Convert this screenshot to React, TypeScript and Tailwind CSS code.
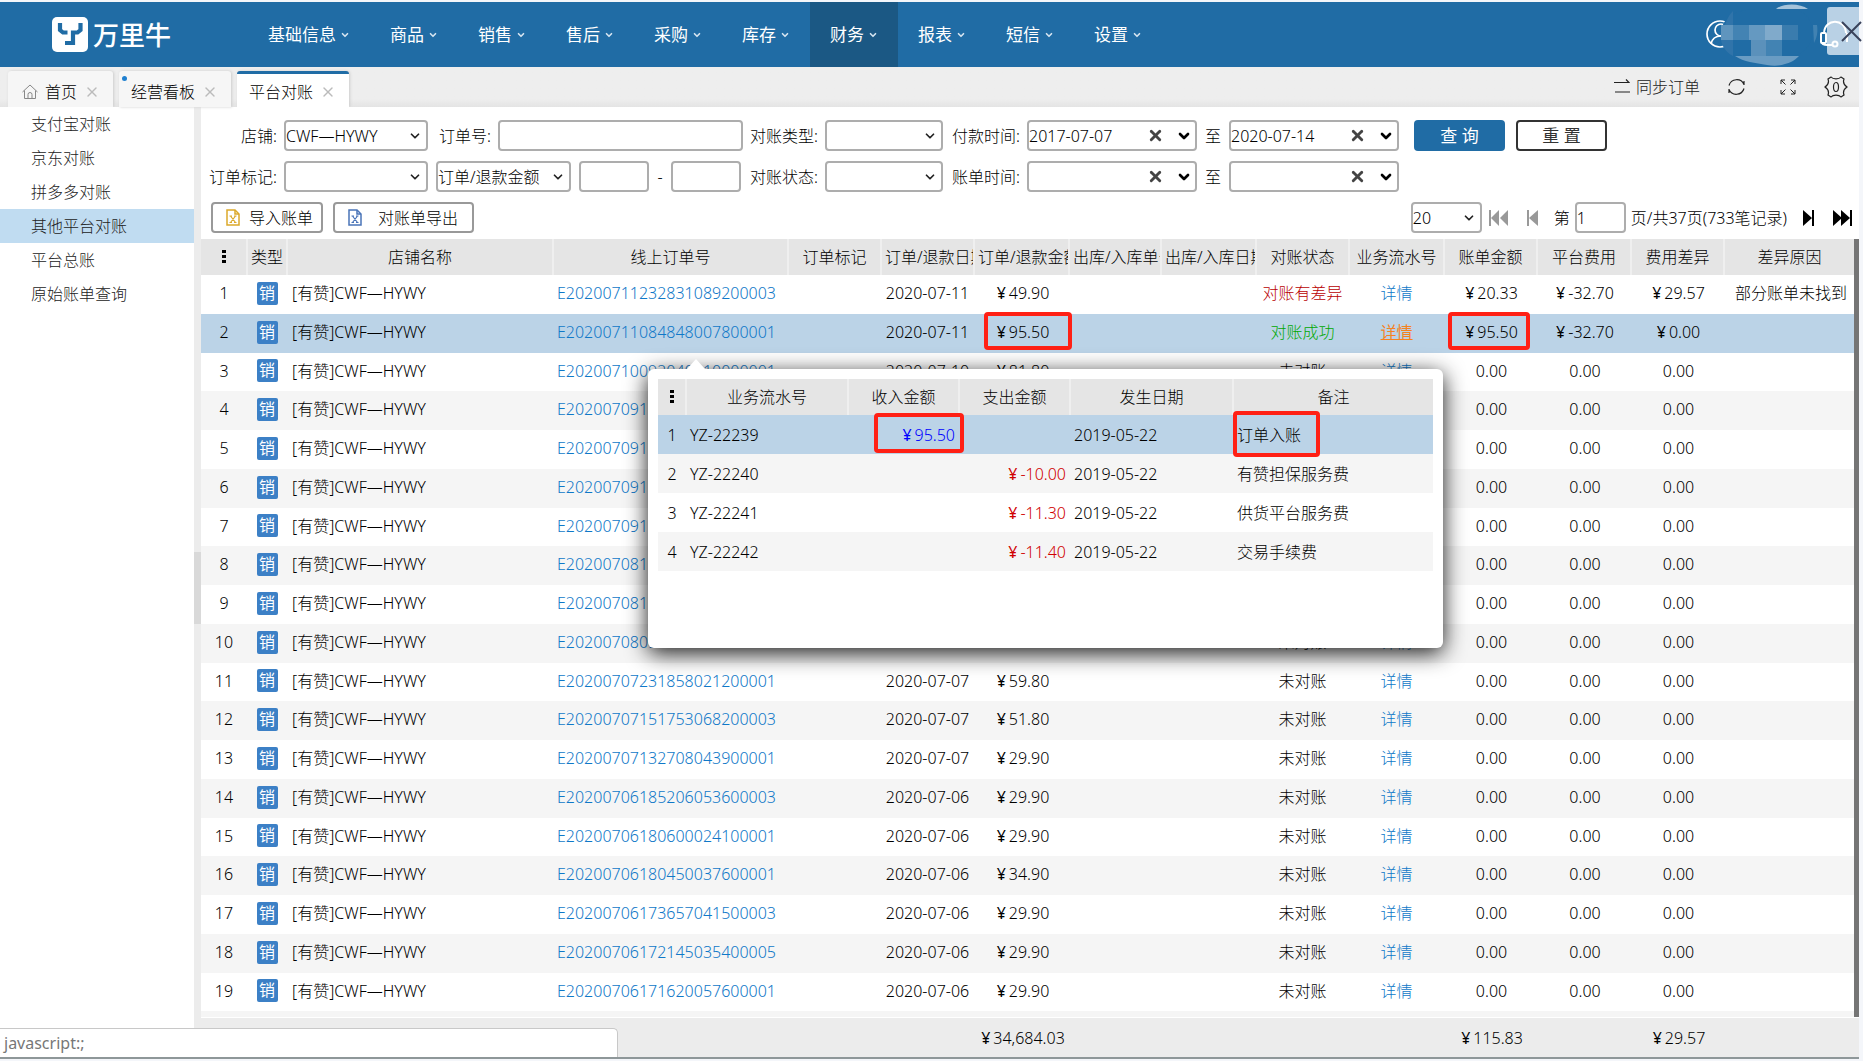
import React from "react";
import { ChevronDown, X } from "lucide-react";

const menus = ["基础信息", "商品", "销售", "售后", "采购", "库存", "财务", "报表", "短信", "设置"];
const sideItems = ["支付宝对账", "京东对账", "拼多多对账", "其他平台对账", "平台总账", "原始账单查询"];

type Row = {
  order: string;
  date: string;
  amount: string;
  status: string;
  bill: string;
  fee: string;
  diff: string;
  reason: string;
};

const pending = (order: string, date: string, amount: string): Row => ({
  order,
  date,
  amount,
  status: "未对账",
  bill: "0.00",
  fee: "0.00",
  diff: "0.00",
  reason: "",
});

const rows: Row[] = [
  { order: "E20200711232831089200003", date: "2020-07-11", amount: "¥49.90", status: "对账有差异", bill: "¥20.33", fee: "¥-32.70", diff: "¥29.57", reason: "部分账单未找到" },
  { order: "E20200711084848007800001", date: "2020-07-11", amount: "¥95.50", status: "对账成功", bill: "¥95.50", fee: "¥-32.70", diff: "¥0.00", reason: "" },
  pending("E20200710092040010000001", "2020-07-10", "¥81.80"),
  pending("E20200709193045021200001", "2020-07-09", "¥29.90"),
  pending("E20200709182011043600001", "2020-07-09", "¥29.90"),
  pending("E20200709164502017800003", "2020-07-09", "¥34.90"),
  pending("E20200709113208052400001", "2020-07-09", "¥29.90"),
  pending("E20200708191530038600001", "2020-07-08", "¥29.90"),
  pending("E20200708102644026200003", "2020-07-08", "¥29.90"),
  pending("E20200708093317064100001", "2020-07-08", "¥51.80"),
  pending("E20200707231858021200001", "2020-07-07", "¥59.80"),
  pending("E20200707151753068200003", "2020-07-07", "¥51.80"),
  pending("E20200707132708043900001", "2020-07-07", "¥29.90"),
  pending("E20200706185206053600003", "2020-07-06", "¥29.90"),
  pending("E20200706180600024100001", "2020-07-06", "¥29.90"),
  pending("E20200706180450037600001", "2020-07-06", "¥34.90"),
  pending("E20200706173657041500003", "2020-07-06", "¥29.90"),
  pending("E20200706172145035400005", "2020-07-06", "¥29.90"),
  pending("E20200706171620057600001", "2020-07-06", "¥29.90"),
];

const flows = [
  { no: "YZ-22239", income: "¥95.50", expense: "", date: "2019-05-22", note: "订单入账" },
  { no: "YZ-22240", income: "", expense: "¥-10.00", date: "2019-05-22", note: "有赞担保服务费" },
  { no: "YZ-22241", income: "", expense: "¥-11.30", date: "2019-05-22", note: "供货平台服务费" },
  { no: "YZ-22242", income: "", expense: "¥-11.40", date: "2019-05-22", note: "交易手续费" },
];

function Money({ value }: { value: string }) {
  if (!value.startsWith("¥")) return <>{value}</>;
  return (
    <>
      <span className="mr-[3px] font-normal">¥</span>
      {value.slice(1)}
    </>
  );
}

function Marked({ on, children, className }: { on: boolean; children: React.ReactNode; className: string }) {
  if (!on) return <>{children}</>;
  return (
    <span className="relative inline-block">
      {children}
      <span className={"pointer-events-none absolute rounded-[4px] border-4 border-[#ff2015] " + className} />
    </span>
  );
}

function Logo() {
  return (
    <svg width="36" height="35" viewBox="0 0 36 35" aria-hidden="true">
      <rect width="36" height="35" rx="5" fill="#fff" />
      <path d="M8 6v7l3 2.500h4.500M28.500 6v7l-3 2.500H21v10.500h-8" fill="none" stroke="#206ca5" strokeWidth="4.200" />
    </svg>
  );
}

function SheetIcon({ className }: { className: string }) {
  return (
    <svg className={"shrink-0 " + className} width="14" height="17" viewBox="0 0 14 17" fill="none" stroke="currentColor" strokeWidth="1.500" aria-hidden="true">
      <path d="M1 1h8l4 4v11H1z" />
      <path d="M9 1v4h4" />
      <path d="M4.500 7l5 6.500M9.500 7l-5 6.500M3.500 7h2.500M8 7h2.500M3.500 13.500h2.500M8 13.500h2.500" strokeWidth="1.200" />
    </svg>
  );
}

function Picker({ label, value, className }: { label: string; value: string; className: string }) {
  return (
    <span className={"relative h-[31px] shrink-0 " + className}>
      <select aria-label={label} defaultValue={value} className="h-full w-full appearance-none rounded-[4px] border-2 border-[#adadad] bg-white pr-6 leading-none text-black">
        <option>{value}</option>
      </select>
      <ChevronDown size={14} strokeWidth={3} className="pointer-events-none absolute right-[6px] top-[9px] text-[#222]" />
    </span>
  );
}

function DateBox({ label, value, className }: { label: string; value: string; className: string }) {
  return (
    <span className={"flex h-[31px] shrink-0 items-center rounded-[4px] border-2 border-[#adadad] bg-white pr-[3px] " + className}>
      <input aria-label={label} defaultValue={value} className="h-full w-full min-w-0 flex-1 text-black outline-none" />
      <button aria-label={"清除" + label} className="mr-[12px] text-[#444]">
        <X size={17} strokeWidth={4} />
      </button>
      <button aria-label={"选择" + label} className="text-black">
        <ChevronDown size={16} strokeWidth={4} />
      </button>
    </span>
  );
}

const box = "h-[31px] shrink-0 rounded-[4px] border-2 border-[#adadad] bg-white outline-none";
const lab = "shrink-0 pr-[7px] text-right";

function Header() {
  return (
    <header className="relative mt-[2px] flex h-[65px] items-center bg-[#206ca5] font-normal text-white">
      <a href="#home" className="flex w-[248px] shrink-0 items-center gap-[5px] pl-[52px] text-[26px] font-medium leading-none">
        <Logo />
        <span>万里牛</span>
      </a>
      <nav className="flex h-full">
        {menus.map((m) => (
          <button key={m} className={"flex h-full items-center gap-1 px-5 text-[17px] " + (m === "财务" ? "bg-[#1b5884]" : "")}>
            {m}
            <ChevronDown size={10} strokeWidth={4} className="text-[#d5e4f0]" />
          </button>
        ))}
      </nav>
      <svg className="ml-auto h-[65px] w-[157px] shrink-0 overflow-visible" viewBox="0 0 157 65" fill="none" aria-hidden="true">
        <g stroke="#fff" strokeWidth="1.700">
          <circle cx="18" cy="32" r="13" />
          <circle cx="19" cy="28" r="6" />
          <path d="M9 42c1-5 4-8 10-8s9 3 10 8" />
        </g>
        <path d="M19 33C19 16 32 8 54 7h40c12 5 16 12 16 23 0 16-10 22-23 26-25 12-64 6-68-23z" fill="#206ca5" />
        <path d="M31 9v14H23c2-6 4-10 8-14zM19 38h12v16c-6-3-11-9-12-16z" fill="#3074aa" />
        <path d="M19 23h12v15H19z" fill="#5f95be" />
        <path d="M31 23h16v15H31z" fill="#4383b3" />
        <path d="M47 23h16v15H47z" fill="#6599c1" />
        <path d="M63 23h17v15H63z" fill="#80aacb" />
        <path d="M80 23h16v15H80z" fill="#3a7cae" />
        <path d="M49 38h15v16H49z" fill="#5b91bb" />
        <path d="M64 38h16v16H64z" fill="#4283b3" />
        <path d="M33 54h64c-5 5-9 7-14 8-5 2-12 2-18 1-12-2-23-3-32-9z" fill="#6a9cc3" />
        <path d="M74 7c7-6 24-6 32 0z" fill="#a5c3da" />
        <path d="M111 23h4c1 7 0 12-3 18z" fill="#4182b2" />
        <path d="M128 5h29v48h-29a3 3 0 01-3-3V8a3 3 0 013-3z" fill="#b9d1e5" />
        <g stroke="#fff" strokeWidth="2">
          <path d="M122 31c1-15 21-15 22 0" />
          <rect x="119" y="31" width="5" height="10" rx="1" />
          <path d="M120 41c1 2 3 2 10 2M145 31v9" />
          <circle cx="133" cy="42" r="2.500" />
        </g>
        <path d="M140 20l19 19M159 20l-19 19" stroke="#39425a" strokeWidth="2" />
      </svg>
    </header>
  );
}

function CloseTab({ name }: { name: string }) {
  return (
    <button aria-label={"关闭" + name} className="ml-[7px] text-[#bbb]">
      <X size={16} strokeWidth={2} />
    </button>
  );
}

function TabBar() {
  return (
    <div className="flex h-10 items-end bg-gradient-to-b from-[#eeeeee] from-80% to-[#e4e4e4] pl-2 text-base text-black">
      <div className="flex h-9 items-center rounded-t-[3px] bg-[#f6f6f6] pl-[14px] pr-[13px] pt-[6px] shadow-[1px_0_3px_#ccc]">
        <svg width="16" height="16" viewBox="0 0 16 16" fill="none" stroke="#888" aria-hidden="true">
          <path d="M.5 8L8 1l7.500 7M2.500 6.500v8h11v-8M6 14.500v-4a2 2 0 014 0v4" />
        </svg>
        <a href="#home" className="ml-[7px]">首页</a>
        <CloseTab name="首页" />
      </div>
      <div className="relative ml-[6px] flex h-9 items-center rounded-t-[3px] bg-[#f6f6f6] pl-3 pr-[13px] pt-[6px] shadow-[1px_0_3px_#ccc]">
        <span className="absolute left-[3px] top-[5px] size-[5px] rounded-full bg-[#2080d0]" />
        <a href="#board">经营看板</a>
        <CloseTab name="经营看板" />
      </div>
      <div className="ml-[6px] flex h-9 items-center rounded-t-[3px] border-t-[3px] border-[#206ca5] bg-white pl-3 pr-[13px] pt-[3px] shadow-[1px_0_3px_#ccc]">
        <a href="#platform">平台对账</a>
        <CloseTab name="平台对账" />
      </div>
      <div className="ml-auto flex h-full items-center pr-[11px] text-[#222]">
        <button className="flex items-center gap-[6px]">
          <svg width="16" height="16" viewBox="0 0 16 16" fill="none" stroke="currentColor" strokeWidth="1.200" aria-hidden="true">
            <path d="M0 3.500h15l-3-3M16 13H1" />
          </svg>
          同步订单
        </button>
        <button aria-label="刷新" className="ml-7">
          <svg width="17" height="18" viewBox="0 0 17 18" fill="none" stroke="currentColor" strokeWidth="1.200" aria-hidden="true">
            <path d="M1 7.500a8 8 0 0115-1M16 10.500a8 8 0 01-15 1M16 3v4M1 15v-4" />
          </svg>
        </button>
        <button aria-label="全屏" className="ml-[35px]">
          <svg width="16" height="16" viewBox="0 0 16 16" fill="none" stroke="currentColor" aria-hidden="true">
            <path d="M5.500 5.500L1 1M1 5V1h4M10.500 5.500L15 1M11 1h4v4M5.500 10.500L1 15M1 11v4h4M10.500 10.500L15 15M15 11v4h-4" />
          </svg>
        </button>
        <button aria-label="设置" className="ml-[28px]">
          <svg width="24" height="22" viewBox="0 0 24 22" fill="none" stroke="currentColor" strokeWidth="1.200" aria-hidden="true">
            <path d="M7 1c2 2.500 8 2.500 10 0l3 2c-1.500 4 0 6 3 8-3 2-4.500 4-3 8l-3 2c-2-2.500-8-2.500-10 0l-3-2c1.500-4 0-6-3-8 3-2 4.500-4 3-8z" />
            <ellipse cx="12" cy="11" rx="2.500" ry="4.500" />
          </svg>
        </button>
      </div>
    </div>
  );
}

function Pager() {
  return (
    <div className="ml-auto flex items-center pr-[6px]">
      <Picker label="每页条数" value="20" className="w-[71px]" />
      <button aria-label="首页" className="ml-[7px] text-[#999]">
        <svg width="20" height="16" viewBox="0 0 20 16" fill="currentColor" aria-hidden="true"><path d="M0 0h2v16H0zM10 0v16L2 8zM19 0v16l-8-8z" /></svg>
      </button>
      <button aria-label="上一页" className="ml-[18px] text-[#999]">
        <svg width="12" height="16" viewBox="0 0 12 16" fill="currentColor" aria-hidden="true"><path d="M0 0h2v16H0zM11 0v16L2 8z" /></svg>
      </button>
      <label htmlFor="page" className="ml-[15px]">第</label>
      <input id="page" defaultValue="1" className={box + " ml-[5px] w-[51px]"} />
      <span className="ml-[5px]">页/共37页(733笔记录)</span>
      <button aria-label="下一页" className="ml-[16px] text-black">
        <svg width="12" height="16" viewBox="0 0 12 16" fill="currentColor" aria-hidden="true"><path d="M9 0h2v16H9zM0 0v16l9-8z" /></svg>
      </button>
      <button aria-label="末页" className="ml-[18px] text-black">
        <svg width="20" height="16" viewBox="0 0 20 16" fill="currentColor" aria-hidden="true"><path d="M17 0h2v16h-2zM0 0v16l9-8zM8 0v16l9-8z" /></svg>
      </button>
    </div>
  );
}

function Filters() {
  return (
    <div className="flex flex-col gap-[10px] pb-[6px] pt-[13px] text-black">
      <div className="flex items-center">
        <span className={lab + " w-[83px]"}>店铺:</span>
        <Picker label="店铺" value="CWF—HYWY" className="w-[144px]" />
        <label htmlFor="orderNo" className={lab + " w-[70px]"}>订单号:</label>
        <input id="orderNo" className={box + " w-[245px]"} />
        <span className={lab + " w-[82px]"}>对账类型:</span>
        <Picker label="对账类型" value="" className="w-[118px]" />
        <span className={lab + " w-[84px]"}>付款时间:</span>
        <DateBox label="付款开始时间" value="2017-07-07" className="w-[170px]" />
        <span className="w-8 shrink-0 text-center">至</span>
        <DateBox label="付款结束时间" value="2020-07-14" className="w-[170px]" />
        <button className="ml-[15px] h-[31px] w-[91px] rounded-[4px] bg-[#206ca5] text-[17px] font-normal text-white">查 询</button>
        <button className="ml-[11px] h-[31px] w-[91px] rounded-[4px] border-2 border-[#333] bg-white text-[17px] font-normal text-[#333]">重 置</button>
      </div>
      <div className="flex items-center">
        <span className={lab + " w-[83px]"}>订单标记:</span>
        <Picker label="订单标记" value="" className="w-[144px]" />
        <span className="ml-2 flex">
          <Picker label="金额类型" value="订单/退款金额" className="w-[135px]" />
        </span>
        <input aria-label="最小金额" className={box + " ml-2 w-[70px]"} />
        <span className="w-[22px] shrink-0 text-center">-</span>
        <input aria-label="最大金额" className={box + " w-[70px]"} />
        <span className={lab + " w-[84px]"}>对账状态:</span>
        <Picker label="对账状态" value="" className="w-[118px]" />
        <span className={lab + " w-[84px]"}>账单时间:</span>
        <DateBox label="账单开始时间" value="" className="w-[170px]" />
        <span className="w-8 shrink-0 text-center">至</span>
        <DateBox label="账单结束时间" value="" className="w-[170px]" />
      </div>
      <div className="flex items-center pl-[10px]">
        <button className="flex h-[31px] w-[112px] items-center gap-[9px] whitespace-nowrap rounded-[4px] border-2 border-[#999] pl-[13px]">
          <SheetIcon className="text-[#dba92b]" />
          导入账单
        </button>
        <button className="ml-[10px] flex h-[31px] w-[141px] items-center gap-[16px] whitespace-nowrap rounded-[4px] border-2 border-[#999] pl-[13px]">
          <SheetIcon className="text-[#4a74b8]" />
          对账单导出
        </button>
        <Pager />
      </div>
    </div>
  );
}

function Cols() {
  return (
    <colgroup>
      <col className="w-[46px]" />
      <col className="w-[40px]" />
      <col />
      <col className="w-[235px]" />
      <col className="w-[93px]" />
      <col className="w-[93px]" />
      <col className="w-[95px]" />
      <col className="w-[92px]" />
      <col className="w-[95px]" />
      <col className="w-[93px]" />
      <col className="w-[95px]" />
      <col className="w-[93px]" />
      <col className="w-[94px]" />
      <col className="w-[93px]" />
      <col className="w-[130px]" />
    </colgroup>
  );
}

const heads = ["类型", "店铺名称", "线上订单号", "订单标记", "订单/退款日期", "订单/退款金额", "出库/入库单号", "出库/入库日期", "对账状态", "业务流水号", "账单金额", "平台费用", "费用差异", "差异原因"];
const clipped = "订单/退款日期 订单/退款金额 出库/入库单号 出库/入库日期";

function MainTable() {
  return (
    <table className="w-full table-fixed border-collapse text-center text-black">
      <Cols />
      <thead>
        <tr className="h-9 bg-[#e5e5e5]">
          <th className="border-r-2 border-[#efefef] p-0 font-light" aria-label="序号">
            <Dots />
          </th>
          {heads.map((h) => (
            <th key={h} className={"overflow-hidden whitespace-nowrap border-r-2 border-[#efefef] p-0 font-light last:border-r-0 " + (clipped.includes(h) ? "pl-[3px] text-left" : "")}>
              {h}
            </th>
          ))}
        </tr>
      </thead>
      <tbody>
        {rows.map((r, i) => (
          <tr key={r.order} className={"h-[39px] [&:nth-child(4n+3)]:h-[38px] [&>td]:whitespace-nowrap [&>td]:pb-[3px] " + (i === 1 ? "bg-[#bbd3e7]" : i % 2 ? "bg-[#f5f5f5]" : "bg-white")}>
            <td>{i + 1}</td>
            <td>
              <span className="mx-auto block h-[23px] w-[21px] rounded-[2px] bg-[#3c80c6] font-normal leading-[23px] text-white">销</span>
            </td>
            <td>
              <span className="block pl-[5px] text-left">[有赞]CWF—HYWY</span>
            </td>
            <td>
              <a href="#order" className="block pl-1 text-left text-[#0f78c8]">{r.order}</a>
            </td>
            <td />
            <td>{r.date}</td>
            <td className="pl-[3px]">
              <Marked on={i === 1} className="-bottom-[6px] -left-[13px] -right-[23px] -top-[8px]">
                <Money value={r.amount} />
              </Marked>
            </td>
            <td />
            <td />
            <td className={i === 0 ? "text-[#b80000]" : i === 1 ? "text-[#00a800]" : ""}>{r.status}</td>
            <td>
              <a href="#detail" className={i === 1 ? "font-normal text-[#f5821f] underline" : "text-[#0f78c8]"}>详情</a>
            </td>
            <td className="pl-[2px]">
              <Marked on={i === 1} className="-bottom-[6px] -left-[17px] -right-[12px] -top-[8px]">
                <Money value={r.bill} />
              </Marked>
            </td>
            <td className="pl-[2px]"><Money value={r.fee} /></td>
            <td className="pl-[2px]"><Money value={r.diff} /></td>
            <td className="pl-1">{r.reason}</td>
          </tr>
        ))}
        <tr className="h-[6px] bg-[#f5f5f5]">
          <td colSpan={15} className="p-0" />
        </tr>
      </tbody>
    </table>
  );
}

function Dots() {
  return (
    <svg className="mx-auto" width="4" height="14" viewBox="0 0 4 14" fill="currentColor" aria-hidden="true">
      <path d="M0 0h4v3H0zM0 5h4v3H0zM0 10h4v3H0z" />
    </svg>
  );
}

function FlowPopup() {
  return (
    <div role="dialog" aria-label="业务流水" className="absolute left-[447px] top-[130px] h-[279px] w-[795px] rounded-[6px] bg-white px-[10px] pt-[10px] shadow-[0_5px_22px_rgba(0,0,0,0.9)]">
      <svg className="absolute -top-[10px] left-[39px]" width="18" height="10" viewBox="0 0 18 10" aria-hidden="true">
        <path d="M0 10L9 0l9 10z" fill="#fff" />
      </svg>
      <table className="w-full table-fixed border-collapse text-black">
        <colgroup>
          <col className="w-[28px]" />
          <col className="w-[162px]" />
          <col className="w-[111px]" />
          <col className="w-[111px]" />
          <col className="w-[163px]" />
          <col />
        </colgroup>
        <thead>
          <tr className="h-9 bg-[#e5e5e5]">
            <th aria-label="序号" className="border-r-2 border-[#efefef] p-0"><Dots /></th>
            {["业务流水号", "收入金额", "支出金额", "发生日期", "备注"].map((h) => (
              <th key={h} className="border-r-2 border-[#efefef] p-0 text-center font-light last:border-r-0">{h}</th>
            ))}
          </tr>
        </thead>
        <tbody>
          {flows.map((f, i) => (
            <tr key={f.no} className={"h-[39px] [&>td]:px-1 [&>td]:py-0 " + (i === 0 ? "bg-[#bbd3e7]" : i % 2 ? "bg-[#f5f5f5]" : "bg-white")}>
              <td className="text-center">{i + 1}</td>
              <td>{f.no}</td>
              <td className="text-right text-[#0000ff]">
                <Marked on={i === 0} className="-bottom-[6px] -left-[28px] -right-[9px] -top-[10px]">
                  <Money value={f.income} />
                </Marked>
              </td>
              <td className="text-right text-[#d00000]"><Money value={f.expense} /></td>
              <td>{f.date}</td>
              <td>
                <Marked on={i === 0} className="-bottom-[10px] -left-[4px] -right-[19px] -top-[12px]">
                  {f.note}
                </Marked>
              </td>
            </tr>
          ))}
        </tbody>
      </table>
    </div>
  );
}

export default function App() {
  return (
    <div className="relative flex min-h-screen flex-col bg-[#f4f6fa] pr-1 text-base font-light leading-6 [font-family:'Noto_Sans','Noto_Sans_CJK_SC',sans-serif]">
      <Header />
      <TabBar />
      <div className="flex flex-1 bg-white">
        <nav className="w-[194px] shrink-0 text-[#222]">
          {sideItems.map((s) => (
            <a key={s} href="#menu" className={"flex h-[34px] items-center pl-[31px] " + (s === "其他平台对账" ? "bg-[#c0dcf1]" : "")}>
              {s}
            </a>
          ))}
        </nav>
        <div className="flex w-[7px] shrink-0 items-center bg-[#ececec]">
          <div className="mb-[-12px] h-[72px] w-full bg-[#d9d9d9]" />
        </div>
        <main className="flex min-w-0 flex-1 flex-col">
          <Filters />
          <div className="relative flex">
            <div className="min-w-0 flex-1">
              <MainTable />
            </div>
            <div className="w-[5px] shrink-0 bg-[#757575]" />
            <FlowPopup />
          </div>
          <div className="mt-px flex flex-1 items-center bg-[#ececec] pr-[5px]">
            <table className="w-full table-fixed border-collapse text-center text-black">
              <Cols />
              <tbody>
                <tr className="[&>td]:whitespace-nowrap [&>td]:pl-[3px]">
                  <td colSpan={6} />
                  <td><Money value="¥34,684.03" /></td>
                  <td colSpan={4} />
                  <td><Money value="¥115.83" /></td>
                  <td />
                  <td><Money value="¥29.57" /></td>
                  <td />
                </tr>
              </tbody>
            </table>
          </div>
        </main>
      </div>
      <div className="flex h-1 border-t-2 border-[#8e9799]" />
      <div className="absolute bottom-1 left-0 h-[29px] w-[618px] rounded-tr-[5px] border-r border-t border-[#c8c8c8] bg-white pl-1 font-normal leading-7 text-[#777]">javascript:;</div>
    </div>
  );
}
